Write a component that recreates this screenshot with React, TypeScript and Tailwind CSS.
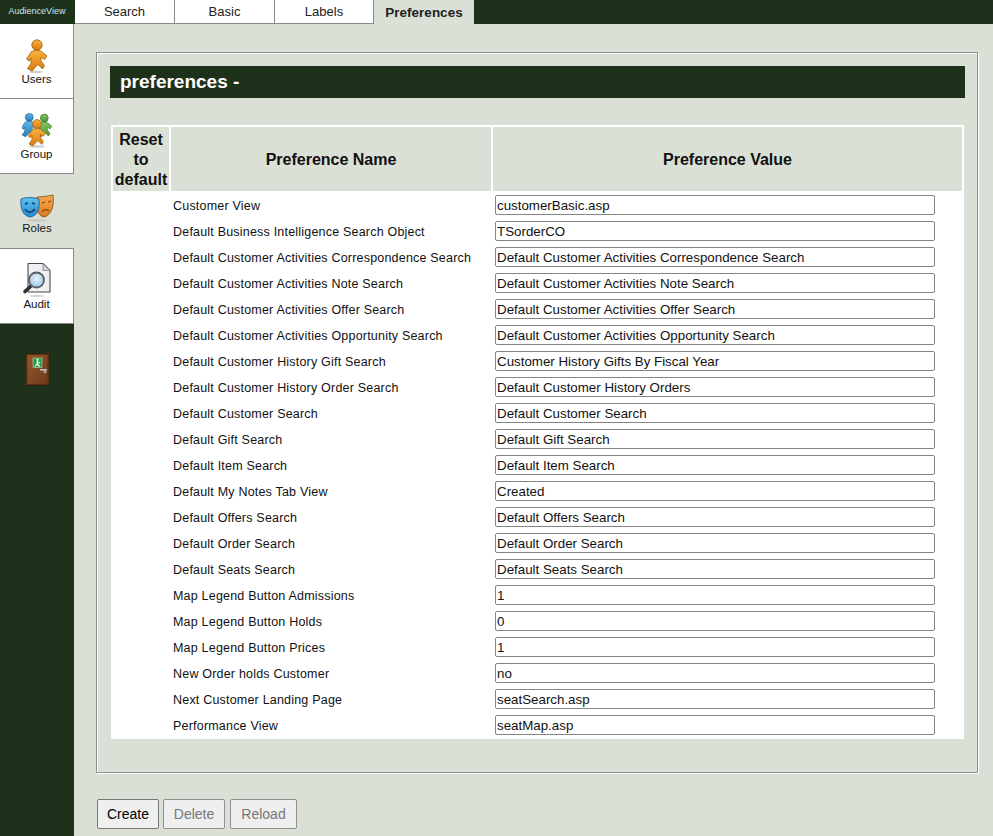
const tabs = [
  { label: "Search", width: "w-[100px]" },
  { label: "Basic", width: "w-[100px]" },
  { label: "Labels", width: "w-[99px]" },
];

const prefs = [
  ["Customer View", "customerBasic.asp"],
  ["Default Business Intelligence Search Object", "TSorderCO"],
  ["Default Customer Activities Correspondence Search", "Default Customer Activities Correspondence Search"],
  ["Default Customer Activities Note Search", "Default Customer Activities Note Search"],
  ["Default Customer Activities Offer Search", "Default Customer Activities Offer Search"],
  ["Default Customer Activities Opportunity Search", "Default Customer Activities Opportunity Search"],
  ["Default Customer History Gift Search", "Customer History Gifts By Fiscal Year"],
  ["Default Customer History Order Search", "Default Customer History Orders"],
  ["Default Customer Search", "Default Customer Search"],
  ["Default Gift Search", "Default Gift Search"],
  ["Default Item Search", "Default Item Search"],
  ["Default My Notes Tab View", "Created"],
  ["Default Offers Search", "Default Offers Search"],
  ["Default Order Search", "Default Order Search"],
  ["Default Seats Search", "Default Seats Search"],
  ["Map Legend Button Admissions", "1"],
  ["Map Legend Button Holds", "0"],
  ["Map Legend Button Prices", "1"],
  ["New Order holds Customer", "no"],
  ["Next Customer Landing Page", "seatSearch.asp"],
  ["Performance View", "seatMap.asp"],
];

function Grad({ id, from, to }: { id: string; from: string; to: string }) {
  return (
    <linearGradient id={id} x1="0" y1="0" x2="0" y2="1">
      <stop offset="0" stopColor={from} />
      <stop offset="1" stopColor={to} />
    </linearGradient>
  );
}

// walking figure, head at (12,6) in its own coordinates
function Person({ x, y, s, fill, stroke }: { x: number; y: number; s: number; fill: string; stroke: string }) {
  return (
    <g transform={`translate(${x} ${y}) scale(${s})`} fill={fill} stroke={stroke} strokeWidth="0.9" strokeLinejoin="round">
      <circle cx="12" cy="6" r="5.2" />
      <path d="M6.5 12.5 C9 11 14.5 11 16.5 12.5 L22 17 L19.5 20.5 L16 18 L16 22 L19.5 26.5 L17.5 30 L13 25.5 L10.5 28 L7 32 L2.5 29.5 L6 24.5 L6 19 L4.5 22 L1.5 20 Z" />
    </g>
  );
}

function UsersIcon() {
  return (
    <svg width="24" height="34" viewBox="0 0 24 34">
      <defs>
        <Grad id="orange1" from="#f8b240" to="#d87a12" />
      </defs>
      <ellipse cx="11" cy="32.8" rx="7" ry="1.2" fill="#cfcfcf" />
      <Person x={0} y={0} s={1} fill="url(#orange1)" stroke="#a9680f" />
    </svg>
  );
}

function GroupIcon() {
  return (
    <svg width="30" height="36" viewBox="0 0 30 36">
      <defs>
        <Grad id="blue1" from="#5cb8ea" to="#2a7fc0" />
        <Grad id="green1" from="#84c45c" to="#4c9434" />
        <Grad id="orange2" from="#f8b240" to="#d87a12" />
      </defs>
      <ellipse cx="15" cy="34.5" rx="8" ry="1.3" fill="#cfcfcf" />
      <Person x={-1.7} y={0.8} s={0.75} fill="url(#blue1)" stroke="#1d5f91" />
      <Person x={13.3} y={1.5} s={0.75} fill="url(#green1)" stroke="#3a7424" />
      <Person x={4.8} y={6.9} s={0.85} fill="url(#orange2)" stroke="#a9680f" />
    </svg>
  );
}

function RolesIcon() {
  return (
    <svg width="34" height="28" viewBox="0 0 34 28">
      <defs>
        <Grad id="maskBlue" from="#62c0ee" to="#2288d2" />
        <Grad id="maskOrange" from="#f5ab4a" to="#dd7a25" />
      </defs>
      <ellipse cx="17" cy="26.5" rx="10" ry="1.2" fill="#c3c7bf" />
      <path d="M17 3 C22 3 28 2 33 1 C34 10 33 19 25 23 C21 23 18 20 17 14 Z" fill="url(#maskOrange)" stroke="#8a5a20" strokeWidth="0.9" />
      <path d="M22 9 l3 -1 M28 8 l3 -1" stroke="#7a4312" strokeWidth="1.3" />
      <path d="M22 18 C24 15 27 15 29 17" fill="none" stroke="#7a4312" strokeWidth="1.3" />
      <path d="M1 5 C6 3 13 3 19 5 C20 14 18 22 10 23 C3 22 0 14 1 5 Z" fill="url(#maskBlue)" stroke="#1b5f8e" strokeWidth="0.9" />
      <path d="M5 10 l3 -1 M12 9 l3 1" stroke="#123f60" strokeWidth="1.4" />
      <path d="M5 15 C7 19 12 19 15 15" fill="none" stroke="#123f60" strokeWidth="1.4" />
    </svg>
  );
}

function AuditIcon() {
  return (
    <svg width="30" height="36" viewBox="0 0 30 36">
      <defs>
        <radialGradient id="lens" cx="0.5" cy="0.4" r="0.6">
          <stop offset="0" stopColor="#e4f3fb" />
          <stop offset="1" stopColor="#9cc8e6" />
        </radialGradient>
      </defs>
      <ellipse cx="15" cy="34" rx="8" ry="1.2" fill="#d5d5d5" />
      <path d="M6 1.5 H21 L28 8.5 V30 H6 Z" fill="#eef0f3" stroke="#4a4a4a" strokeWidth="1.1" strokeLinejoin="round" />
      <path d="M21 1.5 V8.5 H28 Z" fill="#d5d8dc" stroke="#808080" strokeWidth="0.8" />
      <path d="M9 24 L3 29.5" stroke="#2f2f2f" strokeWidth="3.6" strokeLinecap="round" />
      <circle cx="14.5" cy="18" r="7.5" fill="url(#lens)" stroke="#5a5f66" strokeWidth="1.8" />
    </svg>
  );
}

function DoorIcon() {
  return (
    <svg width="25" height="33" viewBox="0 0 25 33">
      <defs>
        <linearGradient id="door" x1="0" y1="0" x2="1" y2="1">
          <stop offset="0" stopColor="#95562a" />
          <stop offset="1" stopColor="#6d3b1a" />
        </linearGradient>
      </defs>
      <rect x="0.5" y="0.5" width="24" height="32" rx="1" fill="#5a3216" stroke="#2f2412" />
      <rect x="2.5" y="2" width="20" height="29" fill="url(#door)" />
      <rect x="8" y="5" width="9" height="9.5" fill="#1ea24a" stroke="#d5ecd8" strokeWidth="0.5" />
      <circle cx="12.5" cy="6.8" r="1.1" fill="#fff" />
      <path d="M12.5 8 L12 11 L10 13.5 M12 10.5 L14.5 13.5 M12.5 9 L15 10" stroke="#fff" strokeWidth="1.2" fill="none" />
      <rect x="15" y="16" width="7" height="1.6" fill="#c9c2b8" />
      <rect x="18.5" y="17.6" width="3" height="2.6" fill="#a89f94" />
    </svg>
  );
}

function SideItem({ label, active, pb, children }: { label: string; active?: boolean; pb: string; children: React.ReactNode }) {
  return (
    <div
      className={`flex h-[75px] flex-col items-center justify-end border-b border-[#8a8a8a] ${pb} ${
        active ? "border-r bg-white" : "bg-[#dbe0d6]"
      }`}
    >
      {children}
      <span className="text-[11.5px] leading-[13px] text-[#111]">{label}</span>
    </div>
  );
}

export default function App() {
  return (
    <div className="flex h-[836px] w-[993px] overflow-hidden bg-[#dbe0d6] font-['Liberation_Sans',Arial,sans-serif] text-black">
      <aside className="flex w-[74px] shrink-0 flex-col bg-[#1e321b]">
        <div className="flex h-[24px] items-center justify-center text-[9px] text-[#cfe3f0]">AudienceView</div>
        <SideItem label="Users" active pb="pb-[12px]"><UsersIcon /></SideItem>
        <SideItem label="Group" active pb="pb-[12px]"><GroupIcon /></SideItem>
        <SideItem label="Roles" pb="pb-[13px]"><RolesIcon /></SideItem>
        <SideItem label="Audit" active pb="pb-[12px]"><AuditIcon /></SideItem>
        <div className="flex justify-center pt-[29px]"><DoorIcon /></div>
      </aside>

      <main className="flex min-w-0 flex-1 flex-col">
        <nav className="flex h-[24px] bg-[#1e321b] pl-px">
          {tabs.map((t) => (
            <div key={t.label} className={`${t.width} flex items-center justify-center border-r border-b border-[#8a8a8a] bg-white pt-px text-[13px] text-[#222]`}>
              {t.label}
            </div>
          ))}
          <div className="flex w-[100px] items-center justify-center bg-[#dbe0d6] pt-[2px] text-[13.5px] font-bold text-[#222]">Preferences</div>
        </nav>

        <div className="px-[22px] pt-[28px]">
          <section className="h-[721px] w-[882px] border border-[#8f8f8f] pt-[13px] pr-[12px] pb-[13px] pl-[13px] shadow-[inset_1px_1px_0_#fff,1px_1px_0_#fff]">
            <h1 className="flex h-[32px] items-center bg-[#1e321b] pl-[10px] text-[19px] font-bold text-white">preferences -</h1>
            <div className="ml-px mt-[27px] w-[853px] bg-white px-[2px] pt-[2px] pb-[1px]">
              <div className="mb-px grid grid-cols-[56px_320px_1fr] gap-x-[2px]">
                <div className="flex h-[64px] items-center justify-center bg-[#dbe0d6] pt-[2px] text-center text-[16px] font-bold leading-[20px] text-[#111]">
                  Reset<br />to<br />default
                </div>
                <div className="flex h-[64px] items-center justify-center bg-[#dbe0d6] pt-[2px] text-[16px] font-bold text-[#111]">Preference Name</div>
                <div className="flex h-[64px] items-center justify-center bg-[#dbe0d6] pt-[2px] text-[16px] font-bold text-[#111]">Preference Value</div>
              </div>
              {prefs.map(([name, value]) => (
                <div key={name} className="grid h-[26px] grid-cols-[56px_320px_1fr] items-center gap-x-[2px]">
                  <div />
                  <div className="pl-[2px] pt-[3px] text-[12.5px] tracking-[0.2px] text-[#111]">{name}</div>
                  <div className="pl-[2px]">
                    <input
                      readOnly
                      value={value}
                      className="block h-[20px] w-[440px] rounded-[2px] border border-[#858585] bg-white px-px text-[13.33px] text-[#111] outline-none"
                    />
                  </div>
                </div>
              ))}
            </div>
          </section>

          <div className="mt-[26px] flex pl-px">
            <button className="h-[30px] w-[62px] rounded-[2px] border border-[#767676] bg-[#efefef] text-[14px] text-black">Create</button>
            <button disabled className="ml-[4px] h-[30px] w-[62px] rounded-[2px] border border-[#8f8f8f] bg-[#efefef] text-[14px] text-[#777]">Delete</button>
            <button disabled className="ml-[5px] h-[30px] w-[67px] rounded-[2px] border border-[#8f8f8f] bg-[#efefef] text-[14px] text-[#777]">Reload</button>
          </div>
        </div>
      </main>
    </div>
  );
}
